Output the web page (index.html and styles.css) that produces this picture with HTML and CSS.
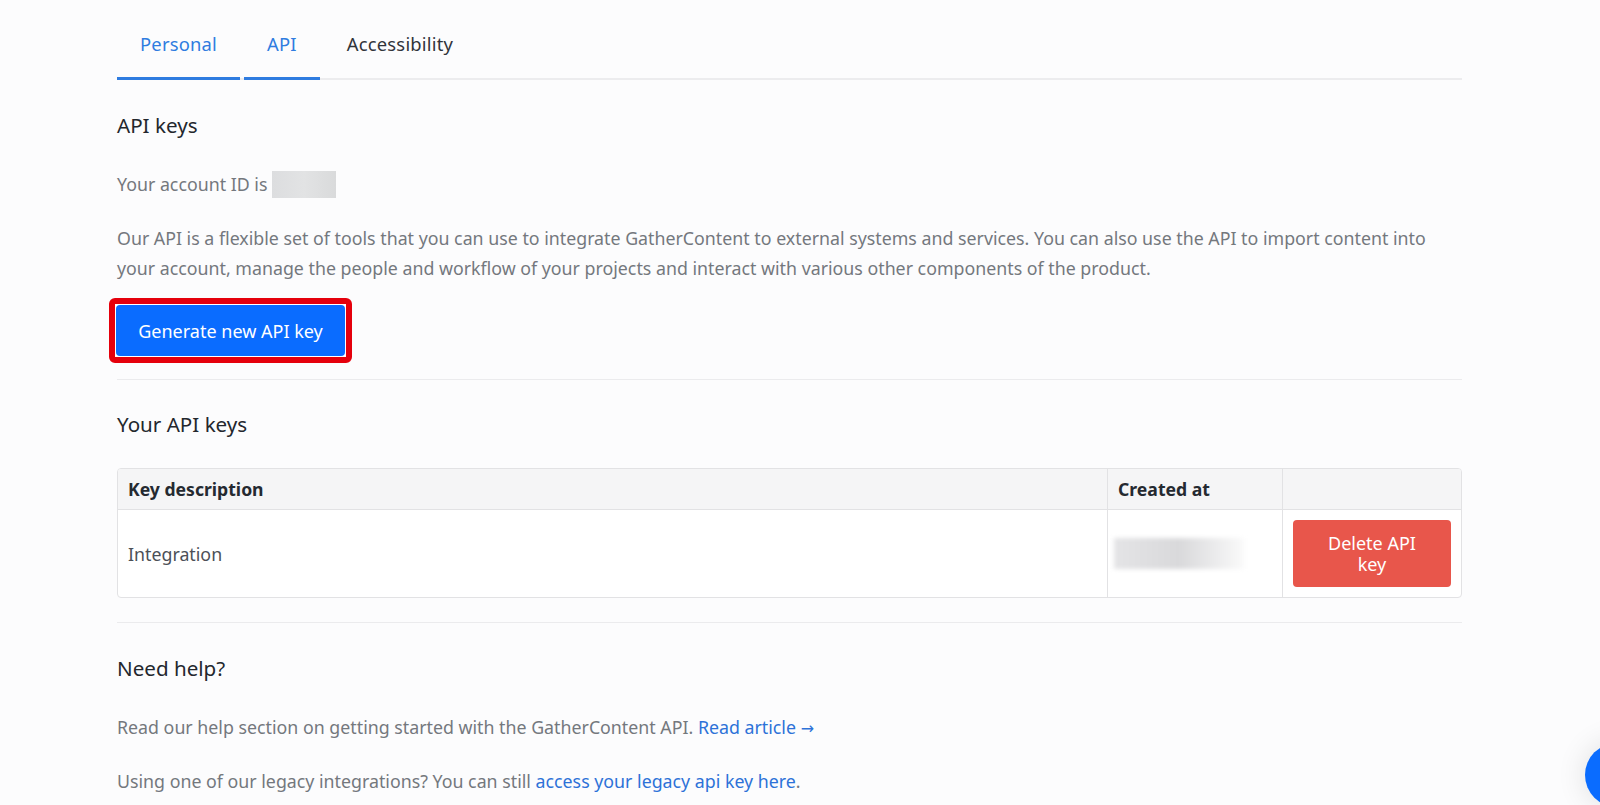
FILE: index.html
```html
<!DOCTYPE html>
<html lang="en">
<head>
    <meta charset="UTF-8">
    <meta name="viewport" content="width=device-width, initial-scale=1.0">
    <title>Account settings - API</title>
    <link rel="stylesheet" href="styles.css">
</head>
<body>
    <div class="page">
        <!-- Settings tabs -->
        <nav class="tabs">
            <a class="tab active" href="#">Personal</a>
            <a class="tab active" href="#">API</a>
            <a class="tab" href="#">Accessibility</a>
        </nav>

        <section class="section">
            <h2>API keys</h2>
            <p class="text">Your account ID is <span class="redacted id-box"></span></p>
            <p class="text">Our API is a flexible set of tools that you can use to integrate GatherContent to external systems and services. You can also use the API to import content into your account, manage the people and workflow of your projects and interact with various other components of the product.</p>
            <div class="highlight">
                <button class="btn btn-primary">Generate new API key</button>
            </div>
        </section>

        <section class="section">
            <h2>Your API keys</h2>
            <div class="table-wrap">
                <table class="keys">
                    <thead>
                        <tr>
                            <th class="col-desc">Key description</th>
                            <th class="col-date">Created at</th>
                            <th class="col-action"></th>
                        </tr>
                    </thead>
                    <tbody>
                        <tr>
                            <td>Integration</td>
                            <td><span class="redacted date-box"></span></td>
                            <td><button class="btn btn-danger">Delete API key</button></td>
                        </tr>
                    </tbody>
                </table>
            </div>
        </section>

        <section class="section">
            <h2>Need help?</h2>
            <p class="text">Read our help section on getting started with the GatherContent API. <a href="#">Read article <span class="arrow">&rarr;</span></a></p>
            <p class="text">Using one of our legacy integrations? You can still <a href="#">access your legacy api key here</a>.</p>
        </section>
    </div>

    <!-- Support chat launcher -->
    <div class="chat-launcher"></div>
</body>
</html>
```

FILE: styles.css
```css
* {
    box-sizing: border-box;
}

body {
    margin: 0;
    background: #fcfcfd;
    font-family: 'Noto Sans', 'Liberation Sans', sans-serif;
    color: #23272d;
    overflow: hidden;
}

.page {
    width: 1345px;
    margin-left: 117px;
}

/* Tabs */
.tabs {
    display: flex;
    gap: 4px;
    border-bottom: 2px solid #ececee;
}

.tab {
    padding: 32px 23px 21px;
    margin-bottom: -2px;
    font-size: 18.4px;
    line-height: 24px;
    letter-spacing: 0.2px;
    color: #30343a;
    text-decoration: none;
    border-bottom: 3px solid transparent;
}

.tab.active {
    color: #2f7ce0;
    border-bottom-color: #2f7ce0;
}

/* Sections */
.section {
    padding: 30px 0 24px;
    border-top: 1px solid #ebebed;
}

.section:first-of-type {
    padding: 31px 0 16px;
    border-top: none;
}

.section:last-of-type {
    padding-top: 31px;
}

h2 {
    margin: 0 0 30px;
    font-size: 20.6px;
    line-height: 28px;
    font-weight: 400;
    color: #23272d;
}

.section:first-of-type h2 {
    margin-bottom: 30px;
}

.text {
    margin: 0 0 24px;
    font-size: 17.8px;
    line-height: 30px;
    color: #74787d;
}

.text:last-child {
    margin-bottom: 0;
}

.text a {
    color: #2d72d8;
    text-decoration: none;
}

.arrow {
    font-family: 'DejaVu Sans', sans-serif;
    font-size: 16px;
    line-height: 1;
}

.redacted {
    display: inline-block;
    vertical-align: middle;
    background: linear-gradient(90deg, #dcdddf, #e2e3e4 50%, #d9dadb);
}

.id-box {
    width: 64px;
    height: 27px;
    margin-top: -3px;
}

/* Buttons */
.highlight {
    display: inline-block;
    margin: -9px 0 0 -8px;
    padding: 1px;
    background: #fff;
    border: 6px solid #e5000c;
    border-radius: 6px;
}

.btn {
    border: none;
    cursor: pointer;
    font-family: inherit;
    color: #fff;
    border-radius: 4px;
}

.btn-primary {
    display: block;
    width: 229px;
    height: 51px;
    background: #0a6cff;
    font-size: 18px;
}

.btn-danger {
    display: block;
    width: 158px;
    height: 67px;
    padding: 0 30px;
    background: #e8564b;
    font-size: 18px;
    line-height: 21px;
}

/* Keys table */
.table-wrap {
    border: 1px solid #e2e2e4;
    border-radius: 4px;
    overflow: hidden;
    background: #fff;
}

.keys {
    width: 100%;
    border-collapse: collapse;
}

.keys th,
.keys td {
    padding: 8px 10px;
    text-align: left;
    font-size: 17.8px;
    border-left: 1px solid #e2e2e4;
}

.keys th:first-child,
.keys td:first-child {
    border-left: none;
}

.keys th {
    background: #f5f5f6;
    font-weight: 700;
    font-size: 17.6px;
    line-height: 24px;
    color: #252a31;
    border-bottom: 1px solid #e2e2e4;
}

.keys td {
    padding: 10px;
    color: #4c5057;
}

.col-desc {
    width: 991px;
}

.col-date {
    width: 175px;
}

.date-box {
    width: 130px;
    height: 31px;
    margin-left: -4px;
    background: linear-gradient(90deg, #e4e4e6, #d9d9db 50%, #fafafa);
    filter: blur(2px);
}

/* Floating chat launcher */
.chat-launcher {
    position: fixed;
    left: 1585px;
    top: 743px;
    width: 64px;
    height: 64px;
    border-radius: 50%;
    background: #0a6cff;
    box-shadow: 0 0 30px rgba(0, 0, 0, 0.12);
}
```
